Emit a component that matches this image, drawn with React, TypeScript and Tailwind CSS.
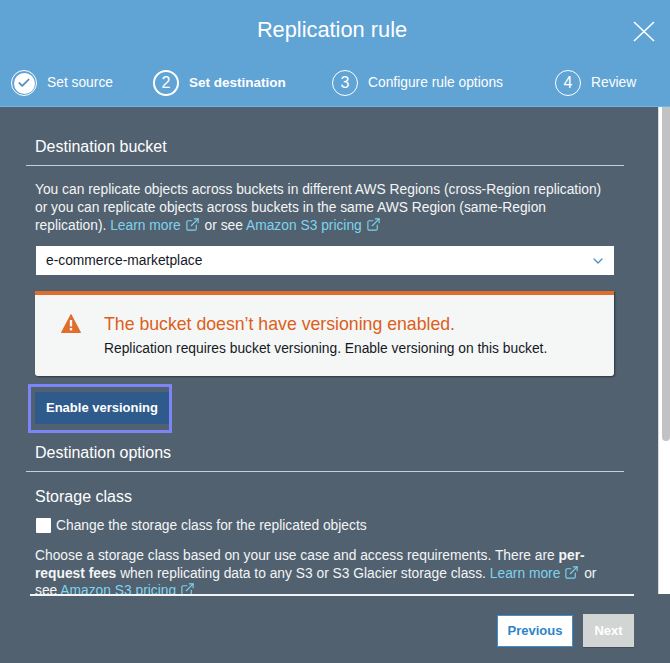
import { Check, ChevronDown, ExternalLink } from 'lucide-react';

const font = { fontFamily: '"Liberation Sans", Arial, sans-serif' };

function Step({ n, label, active, done, className }: { n: string; label: string; active?: boolean; done?: boolean; className: string }) {
  return (
    <div className={`flex items-center ${className}`}>
      {done ? (
        <span className="w-[26px] h-[26px] rounded-full border border-white flex items-center justify-center">
          <span className="w-[21px] h-[21px] rounded-full bg-white flex items-center justify-center">
            <Check size={14} strokeWidth={3} className="text-[#4a8dc4]" />
          </span>
        </span>
      ) : (
        <span className={`w-[26px] h-[26px] rounded-full border-white flex items-center justify-center text-[16px] text-white ${active ? 'border-2' : 'border'}`}>
          {n}
        </span>
      )}
      <span className={`ml-[10px] text-white whitespace-nowrap ${active ? 'font-bold text-[13.5px]' : 'text-[13.8px]'}`}>{label}</span>
    </div>
  );
}

function Ext({ children }: { children: string }) {
  return (
    <a className="text-[#7fd3ee]">
      {children}
      <ExternalLink size={15} strokeWidth={1.8} className="inline ml-[4px] mr-[1px] align-[-2px]" />
    </a>
  );
}

export default function App() {
  return (
    <div style={font} className="w-[670px] h-[663px] bg-[#51616f] flex flex-col overflow-hidden">
      {/* Header */}
      <div className="h-[107px] shrink-0 bg-[#60a3d5] border-b border-[#6bb6ee] relative">
        <h1 className="pt-[17px] pr-[6px] text-center text-[21.8px] leading-[26px] text-white">Replication rule</h1>
        <button className="absolute top-[21px] right-[15px] text-white">
          <svg width="22" height="21" viewBox="0 0 22 21" fill="none" stroke="currentColor" strokeWidth="1.6">
            <path d="M1 1 L21 20 M21 1 L1 20" />
          </svg>
        </button>
        <div className="flex mt-[27px] pl-[11px]">
          <Step n="1" label="Set source" done className="w-[142px]" />
          <Step n="2" label="Set destination" active className="w-[179px]" />
          <Step n="3" label="Configure rule options" className="w-[223px]" />
          <Step n="4" label="Review" className="" />
        </div>
      </div>

      {/* Scrolling body */}
      <div className="h-[487px] shrink-0 flex">
        <div className="w-[658px] overflow-hidden pl-[26px] pr-[34px] text-white text-[13.8px] leading-[18px]">
          <h2 className="pt-[31px] pl-[9px] text-[16px] leading-[18px]">Destination bucket</h2>
          <div className="mt-[9px] border-t border-[#c9ced3]" />
          <p className="mt-[15px] pl-[9px] text-[#f4f5f6] whitespace-nowrap">
            You can replicate objects across buckets in different AWS Regions (cross-Region replication)
            <br />
            or you can replicate objects across buckets in the same AWS Region (same-Region
            <br />
            replication). <Ext>Learn more</Ext> or see <Ext>Amazon S3 pricing</Ext>
          </p>
          <div className="mt-[11px] ml-[10px] mr-[10px] h-[29px] bg-white flex items-center justify-between pl-[10px] pr-[8px] pt-[1px] text-[#16191f]">
            <span>e-commerce-marketplace</span>
            <ChevronDown size={16} strokeWidth={1.8} className="text-[#3f8fd2]" />
          </div>
          <div className="mt-[16px] ml-[9px] mr-[10px] h-[85px] bg-[#f5f6f6] border-t-4 border-[#df6d2c] rounded-b-[3px] shadow-[1px_1px_2px_rgba(0,0,0,0.45)] flex text-[#16191f]">
            <svg width="20" height="19" viewBox="0 0 20 19" className="ml-[26px] mt-[19px] shrink-0">
              <path d="M10 0.5 L19.5 18.5 L0.5 18.5 Z" fill="#df6d2c" stroke="#df6d2c" strokeLinejoin="round" />
              <rect x="8.8" y="6" width="2.4" height="6.5" fill="#f5f6f6" />
              <rect x="8.8" y="14" width="2.4" height="2.4" fill="#f5f6f6" />
            </svg>
            <div className="ml-[23px] pt-[18px]">
              <div className="text-[17.7px] leading-[22px] text-[#dc5f1a]">The bucket doesn’t have versioning enabled.</div>
              <div className="mt-[5px] text-[13.8px] leading-[18px]">Replication requires bucket versioning. Enable versioning on this bucket.</div>
            </div>
          </div>
          {/* focus ring hugs the button on the right */}
          <div className="mt-[8px] ml-[2px] w-[144px] h-[49px] border-[3px] border-[#7b85f5] pl-[4px] pt-[5px]">
            <button className="block w-[134px] h-[32px] bg-[#2f5a8c] text-white font-bold text-[13px]">
              Enable versioning
            </button>
          </div>
          <h2 className="mt-[11px] pl-[9px] text-[16px] leading-[18px]">Destination options</h2>
          <div className="mt-[9px] border-t border-[#c9ced3]" />
          <h2 className="mt-[16px] pl-[9px] text-[16px] leading-[18px]">Storage class</h2>
          <label className="mt-[10px] pl-[10px] flex items-center">
            <span className="w-[15px] h-[15px] bg-white rounded-[1px] shrink-0" />
            <span className="ml-[5px] pt-[1px] text-[#f4f5f6]">Change the storage class for the replicated objects</span>
          </label>
          <p className="mt-[12px] pl-[9px] text-[#f4f5f6] w-[600px] whitespace-nowrap leading-[17.5px]">
            Choose a storage class based on your use case and access requirements. There are <b>per-</b>
            <br />
            <b>request fees</b> when replicating data to any S3 or S3 Glacier storage class. <Ext>Learn more</Ext> or
            <br />
            see <Ext>Amazon S3 pricing</Ext>
          </p>
        </div>
        {/* Scrollbar */}
        <div className="w-[12px] bg-white border-l border-[#d8dadc] pl-[3px]">
          <div className="h-[334px] bg-[#c2c2c2] rounded-b-full" />
        </div>
      </div>

      {/* Footer */}
      <div className="ml-[30px] mr-[36px] border-t-2 border-[#f3f4f5] flex justify-end items-start gap-[10px] pt-[18px]">
        <button className="mt-[1px] w-[76px] h-[32px] bg-white border border-[#3f8fd2] text-[#2f83c7] font-bold text-[13px]">Previous</button>
        <button className="w-[51px] h-[34px] bg-[#d3d4d4] border-b border-[#3f4d5a] text-white font-bold text-[13px]">Next</button>
      </div>
    </div>
  );
}
